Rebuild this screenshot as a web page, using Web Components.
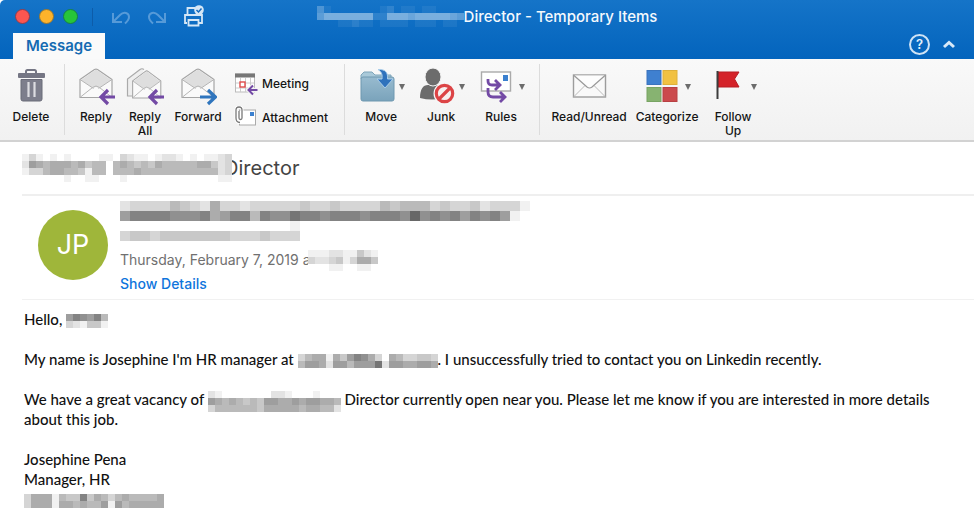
<!DOCTYPE html>
<html lang="en">
<head>
<meta charset="utf-8">
<title>Director - Temporary Items</title>
<style>
html { background: #fff; }
body { margin: 0; font-family: Inter, "Liberation Sans", sans-serif; color: #111; }
</style>
</head>
<body>
<mail-window>
  <title-bar slot="chrome"><pixel-mask tone="light" cell="7" rows="410000000120110110000/577777772277767777765/000112110111101110110"></pixel-mask>Director - Temporary Items</title-bar>
  <tab-strip slot="chrome"></tab-strip>
  <ribbon-bar slot="chrome">
    <ribbon-group>
      <ribbon-button icon="trash" label="Delete" style="--w:62px"></ribbon-button>
    </ribbon-group>
    <ribbon-group class="mail">
      <ribbon-button icon="reply" label="Reply" style="--w:48px"></ribbon-button>
      <ribbon-button icon="replyall" label="Reply All" style="--w:50px"></ribbon-button>
      <ribbon-button icon="forward" label="Forward" style="--w:56px"></ribbon-button>
      <ribbon-stack>
        <ribbon-button small icon="meeting" label="Meeting"></ribbon-button>
        <ribbon-button small icon="attach" label="Attachment"></ribbon-button>
      </ribbon-stack>
    </ribbon-group>
    <ribbon-group class="sort">
      <ribbon-button menu icon="move" label="Move" style="--w:60px"></ribbon-button>
      <ribbon-button menu icon="junk" label="Junk" style="--w:60px"></ribbon-button>
      <ribbon-button menu icon="rules" label="Rules" style="--w:60px"></ribbon-button>
    </ribbon-group>
    <ribbon-group>
      <ribbon-button icon="envelope" label="Read/Unread" style="--w:84px"></ribbon-button>
      <ribbon-button menu icon="categorize" label="Categorize" style="--w:72px"></ribbon-button>
      <ribbon-button menu icon="flag" label="Follow Up" style="--w:60px"></ribbon-button>
    </ribbon-group>
  </ribbon-bar>
  <message-header>
    <pixel-mask slot="subject" cell="7" rows="131010100001103211012210101123/276566656455056545465555566423/133566554155055565555555555523/000000100110001000000000000011"></pixel-mask>
    <span slot="subject">Director</span>
    <span slot="initials">JP</span>
    <pixel-mask slot="from" cell="10" rows="23333543263323333343343333545553433423331/79999888967995988a99899989998b8989798971"></pixel-mask>
    <pixel-mask slot="to" cell="10" rows="000000000000000001/344344444443334333"></pixel-mask>
    <span slot="date">Thursday, February 7, 2019 a</span>
    <pixel-mask slot="date" cell="7" rows="1112211421/3223413664/0001100110"></pixel-mask>
    <a slot="details" href="#details">Show Details</a>
  </message-header>
  <message-body>
    <p>Hello, <pixel-mask cell="7" rows="798795/321441"></pixel-mask></p>
    <p>My name is Josephine I'm HR manager at <pixel-mask cell="7" rows="35661647986306533443/57762775777a27766776"></pixel-mask>. I unsuccessfully tried to contact you on Linkedin recently.</p>
    <p>We have a great vacancy of <pixel-mask cell="7" rows="2100000002210001000/7656545477667677665/3555555466666566552"></pixel-mask> Director currently open near you. Please let me know if you are interested in more details about this job.</p>
    <p>Josephine Pena<br>Manager, HR<br><pixel-mask cell="7" rows="36661544946535655556/36661665655717566666"></pixel-mask></p>
  </message-body>
</mail-window>

<script>
const ENV_OPEN = `
  <path d="M3 12.5 17.500 2.500Q19 1.600 20.500 2.500L35 12.500V30.500H3Z" fill="#fafafa" stroke="#a5a5a5" stroke-width="1.200" stroke-linejoin="round"/>
  <path d="M4 13 17.800 3.200Q19 2.500 20.200 3.200L34 13 22 21Q19 19 16 21Z" fill="#dedede"/>
  <path d="M3.500 12.800 16.500 21.500M34.500 12.800 21.500 21.500M3.500 30 15.500 20.500Q19 17.500 22.500 20.500L34.500 30" fill="none" stroke="#b5b5b5"/>`;
const ARROW_L = `<path d="M39 30H24M31 23 24 30 31 37" fill="none" stroke="#734aa5" stroke-width="3.200"/>`;
const ICONS = {
  trash: `<path d="M14 7V4.500Q14 3 15.500 3H22.500Q24 3 24 4.500V7" fill="none" stroke="#757684" stroke-width="2"/><rect x="6" y="6" width="27" height="5" rx="1" fill="#757684"/><path d="M9 12.500H30V32Q30 34 28 34H11Q9 34 9 32Z" fill="#7d7e8c" stroke="#6b6c79"/><path d="M16.500 15V30M22.500 15V30" stroke="#dddde2" stroke-width="2.200"/>`,
  reply: ENV_OPEN + ARROW_L,
  replyall: `<path d="M6 29H1.500V12L14 2.500Q16 1 18 2.500" fill="#eee" stroke="#aaa" stroke-width="1.200"/><g transform="translate(4 2) scale(.88 .95)">${ENV_OPEN}</g>` + ARROW_L,
  forward: ENV_OPEN + `<path d="M21 30H36M29 23 36.500 30 29 37" fill="none" stroke="#2f75bd" stroke-width="3.200"/>`,
  move: `<path d="M4 12V8L7 5H15L18 8H34V12Z" fill="#a9c9d9" stroke="#7fa5ba"/><rect x="4" y="10" width="33" height="24" rx="2" fill="url(#g)" stroke="#6e98b0"/><path d="M21 2.500C29 2 31 6 30.500 12H36L28 21 20 12H25C25.500 8 25 5 21 2.500Z" fill="#2f72bc" stroke="#a9cdea"/><defs><linearGradient id="g" x2="0" y2="1"><stop stop-color="#98bbcf"/><stop offset="1" stop-color="#7aa3bb"/></linearGradient></defs>`,
  junk: `<path d="M3 31C3 22 6 18 11 18H22Q27 19 27 31Q15 34 3 31Z" fill="#6c6c6c"/><ellipse cx="16" cy="10" rx="8" ry="9" fill="#6c6c6c" stroke="#f3f3f3"/><circle cx="27.500" cy="26.500" r="8.500" fill="#f8eeee" stroke="#f6f6f6" stroke-width="5"/><circle cx="27.500" cy="26.500" r="8.200" fill="#f7f0f0" stroke="#dc4446" stroke-width="3.200"/><path d="M21.500 32.500 33.500 20.500" stroke="#dc4446" stroke-width="3.200"/>`,
  rules: `<rect x="4.500" y="5" width="29" height="19" fill="#fff" stroke="#aaa" stroke-width="1.400"/><rect x="26" y="8" width="5" height="6" fill="#3b80cf"/><g fill="none" stroke="#734aa5" stroke-width="2.800"><path d="M11 12V14Q11 18 15 18H22M18 13 23 18 18 23M11 21V25Q11 30 16 30H27M23 25 28 30 23 35"/></g>`,
  envelope: `<rect x="3.500" y="8" width="32" height="22" fill="#f9f9f9" stroke="#9d9d9d" stroke-width="1.400"/><path d="M4 29.500 15 18.500M35 29.500 24 18.500" stroke="#bbb"/><path d="M4 8.500 17 20Q19.500 22 22 20L35 8.500" fill="#fdfdfd" stroke="#999" stroke-width="1.200"/>`,
  categorize: `<rect x="4" y="3.500" width="14" height="14" fill="#3f80d0" stroke="#3a73bd"/><rect x="20" y="3.500" width="14" height="14" fill="#f1c142" stroke="#deb03a"/><rect x="4" y="20.500" width="14" height="14" fill="#87b371" stroke="#78a463"/><rect x="20" y="20.500" width="14" height="14" fill="#cb4a4d" stroke="#b84044"/>`,
  flag: `<path d="M9 5H30L25.500 12 30 20H9Z" fill="#d42229" stroke="#b71d25"/><path d="M8.500 4V32" stroke="#3d3d3d" stroke-width="2"/>`,
  meeting: `<rect x="1.500" y="2" width="19" height="18" fill="#fff" stroke="#bbb"/><path d="M6.500 6V20M11.500 6V20M16.500 6V20M2 11H20M2 16H20" stroke="#ccc"/><path d="M1 1.500H21V5.500H1Z" fill="#777"/><rect x="6" y="10" width="5" height="5" fill="#fff" stroke="#e04a4a" stroke-width="1.400"/><path d="M23 18H15M19 13.500 14.500 18 19 22.500" fill="none" stroke="#f4f4f4" stroke-width="4"/><path d="M23.500 18H15M19 13.500 14.500 18 19 22.500" fill="none" stroke="#734aa5" stroke-width="2"/>`,
  attach: `<rect x="5.500" y="4" width="16" height="15" fill="#fff" stroke="#aaa"/><rect x="16" y="6" width="4" height="4" fill="#3b80cf"/><path d="M5 5V12Q5 14 6.500 14T8 12V4Q8 1 5 1T2 4V12Q2 16.500 6 16.500" fill="none" stroke="#fff" stroke-width="3"/><path d="M5 5V12Q5 13.500 6.500 13.500T8 12V4Q8 1 5 1T2 4V12Q2 16.500 6 16.500" fill="none" stroke="#777" stroke-width="1.300"/>`
};

const define = (name, html, setup) => {
  const template = document.createElement('template');
  template.innerHTML = html;
  customElements.define(name, class extends HTMLElement {
    connectedCallback() {
      if (this.shadowRoot) return;
      const root = this.attachShadow({ mode: 'open' });
      root.append(template.content.cloneNode(true));
      if (setup) setup(this, root);
    }
  });
};

define('mail-window', `
<style>
:host { display: block; min-height: 100vh; background: #fff; overflow: hidden; }
header { background: linear-gradient(#1574c8, #0364bd 59px); border-radius: 5px 0 0 0; overflow: hidden; }
</style>
<header><slot name="chrome"></slot></header>
<main><slot></slot></main>`);

define('title-bar', `
<style>
:host { display: grid; grid-template-columns: 1fr auto 1fr; align-items: center; height: 33px; color: #f4f9fd; font-size: 15px; font-weight: 500; line-height: 18px; }
.left { display: flex; align-items: center; padding-left: 15px; }
.light { width: 15px; height: 15px; padding: 0; margin-right: 9px; border: 1px solid #8b3d50; border-radius: 50%; background: #fc5650; }
.light.min { background: #fdb32b; border-color: #967632; }
.light.max { background: #27c53a; border-color: #15804a; margin-right: 0; }
.sep { width: 1px; height: 18px; background: #0d5ca9; margin: 0 18px 0 14px; }
.tool { display: block; padding: 0; border: 0; background: none; margin-right: 16px; height: 24px; }
svg { display: block; }
h1 { display: flex; align-items: center; margin: 0; font: inherit; white-space: nowrap; }
</style>
<div class="left">
  <button class="light" aria-label="Close"></button><button class="light min" aria-label="Minimize"></button><button class="light max" aria-label="Zoom"></button>
  <span class="sep"></span>
  <button class="tool" aria-label="Undo"><svg width="20" height="24" fill="none" stroke="#569ad8" stroke-width="2"><path d="M2 8V17H11M2.500 16.500 9 10C13 6 18 8 18 12Q18 15 14 18.500"/></svg></button>
  <button class="tool" aria-label="Redo"><svg width="20" height="24" fill="none" stroke="#569ad8" stroke-width="2"><path d="M18 8V17H9M17.500 16.500 11 10C7 6 2 8 2 12Q2 15 6 18.500"/></svg></button>
  <button class="tool" aria-label="Print"><svg width="22" height="24" fill="none" stroke="#d5e7f6" stroke-width="1.800"><path d="M4.500 9V3H12M4 18H2V10H19V18H16"/><path d="M5.500 15H15.500V20.500H5.500Z"/><circle cx="16" cy="5" r="4.800" fill="#d5e7f6" stroke="none"/><path d="M13.500 5 15.500 7 18.500 3.500" stroke="#1269bd" stroke-width="1.500"/></svg></button>
</div>
<h1><slot></slot></h1>`);

define('tab-strip', `
<style>
:host { display: flex; align-items: stretch; height: 26px; padding: 0 18px 0 13px; }
.tab { border: 0; padding: 0 13px; background: #fafafa; color: #146bb2; font: 600 15px/26px Inter, sans-serif; }
.end { display: flex; gap: 12px; margin-left: auto; align-items: center; padding-bottom: 4px; }
.end button { display: block; padding: 0; border: 0; background: none; }
.end .help { width: 21px; height: 21px; box-sizing: border-box; border: 2px solid #cfe3f5; border-radius: 50%; color: #e5f1fb; font: 600 13px/17px Inter, sans-serif; }
svg { display: block; }
</style>
<button class="tab">Message</button>
<div class="end"><button class="help" aria-label="Help">?</button><button aria-label="Collapse ribbon"><svg width="14" height="14" fill="none" stroke="#d8e9f8" stroke-width="3"><path d="M2 10 7 5.500 12 10"/></svg></button></div>`);

define('ribbon-bar', `
<style>
:host { display: flex; height: 81px; background: linear-gradient(#f9f9f9, #f1f1f1); border-bottom: 2px solid #d2d2d2; }
</style><slot></slot>`);

define('ribbon-group', `
<style>
:host { display: flex; align-items: flex-start; padding: 7px 7px 0; }
:host(:first-child) { padding-left: 0; padding-right: 2px; }
:host(.mail) { padding-right: 16px; }
:host(.sort) { padding-left: 6px; padding-right: 8px; }
:host(:not(:last-child)) { border-right: 1px solid #dcdcdc; margin: 5px 0; padding-top: 2px; }
</style><slot></slot>`);

define('ribbon-stack', `<style>:host { display: flex; flex-direction: column; gap: 8px; padding: 5px 0 0 8px; }</style><slot></slot>`);

define('ribbon-button', `
<style>
:host { display: block; width: var(--w, auto); }
button { display: flex; flex-direction: column; align-items: center; width: 100%; padding: 0; border: 0; background: none; color: #151515; font: 500 12px/14px Inter, sans-serif; }
.art { display: flex; align-items: center; gap: 2px; height: 42px; padding-bottom: 2px; }
svg { display: block; width: 38px; height: 40px; flex: none; }
.caret { border: 3px solid transparent; border-top: 6px solid #6c6c6c; border-bottom: 0; }
:host(:not([menu])) .caret { display: none; }
:host([menu]) svg { width: 40px; }
.label { max-width: 80px; white-space: nowrap; text-align: center; }
.label.wrap { white-space: normal; width: min-content; }
:host([small]) button { flex-direction: row; gap: 4px; }
:host([small]) .art { height: 26px; padding: 0; }
:host([small]) svg { width: 24px; height: 24px; }
</style>
<button><span class="art"><svg aria-hidden="true"></svg><span class="caret"></span></span><span class="label"></span></button>`,
(host, root) => {
  root.querySelector('svg').innerHTML = ICONS[host.getAttribute('icon')];
  const label = root.querySelector('.label');
  label.textContent = host.getAttribute('label');
  label.classList.toggle('wrap', label.textContent.includes(' '));
});

/* Redacted text: each hex digit is one cell, from clear (0) to solid (f). */
define('pixel-mask', `<style>:host { display: inline-block; vertical-align: middle; background: #fff; } :host([tone=light]) { background: none; } svg { display: block; }</style>`,
(host, root) => {
  const rows = host.getAttribute('rows').split('/');
  const c = +host.getAttribute('cell');
  const fill = host.getAttribute('tone') === 'light' ? '#fff' : '#222';
  let out = '';
  rows.forEach((row, y) => [...row].forEach((v, x) => {
    if (v !== '0') out += `<rect x="${x * c}" y="${y * c}" width="${c}" height="${c}" fill="${fill}" fill-opacity="${parseInt(v, 16) / 16}"/>`;
  }));
  root.innerHTML += `<svg aria-hidden="true" shape-rendering="crispEdges" width="${rows[0].length * c}" height="${rows.length * c}">${out}</svg>`;
});

define('message-header', `
<style>
:host { display: block; padding-left: 22px; }
h2 { display: flex; align-items: center; height: 52px; margin: 0; color: #444; font: 400 20px/24px Inter, sans-serif; border-bottom: 2px solid #efefef; }
h2 ::slotted(pixel-mask) { margin: 0 -8px 0 0; position: relative; z-index: 1; }
.card { display: flex; gap: 12px; padding: 5px 0 3px 16px; border-bottom: 1px solid #f1f1f1; }
.avatar { display: grid; place-items: center; width: 70px; height: 70px; margin-top: 9px; border-radius: 50%; background: #9fb63a; color: #fff; font-size: 27px; line-height: 32px; }
.info { display: flex; flex-direction: column; align-items: flex-start; color: #707070; font-size: 14px; line-height: 24px; }
.date { display: flex; align-items: center; margin-top: 7px; }
.date ::slotted(pixel-mask) { margin-left: -3px; }
::slotted(a) { color: #0f75dc; font-weight: 500; text-decoration: none; }
</style>
<h2><slot name="subject"></slot></h2>
<div class="card"><div class="avatar"><slot name="initials"></slot></div>
<div class="info"><slot name="from"></slot><slot name="to"></slot><div class="date"><slot name="date"></slot></div><slot name="details"></slot></div></div>`);

define('message-body', `
<style>
:host { display: block; padding: 9px 24px 16px; color: #111; font: 500 15px/20px Lato, "Liberation Sans", sans-serif; }
::slotted(p) { margin: 0 0 20px; }
</style><slot></slot>`);

/* Masks inside running text must not make their line taller. */
document.querySelectorAll('message-body pixel-mask').forEach(mask => { mask.style.marginBlock = '-4px'; });
</script>
</body>
</html>
